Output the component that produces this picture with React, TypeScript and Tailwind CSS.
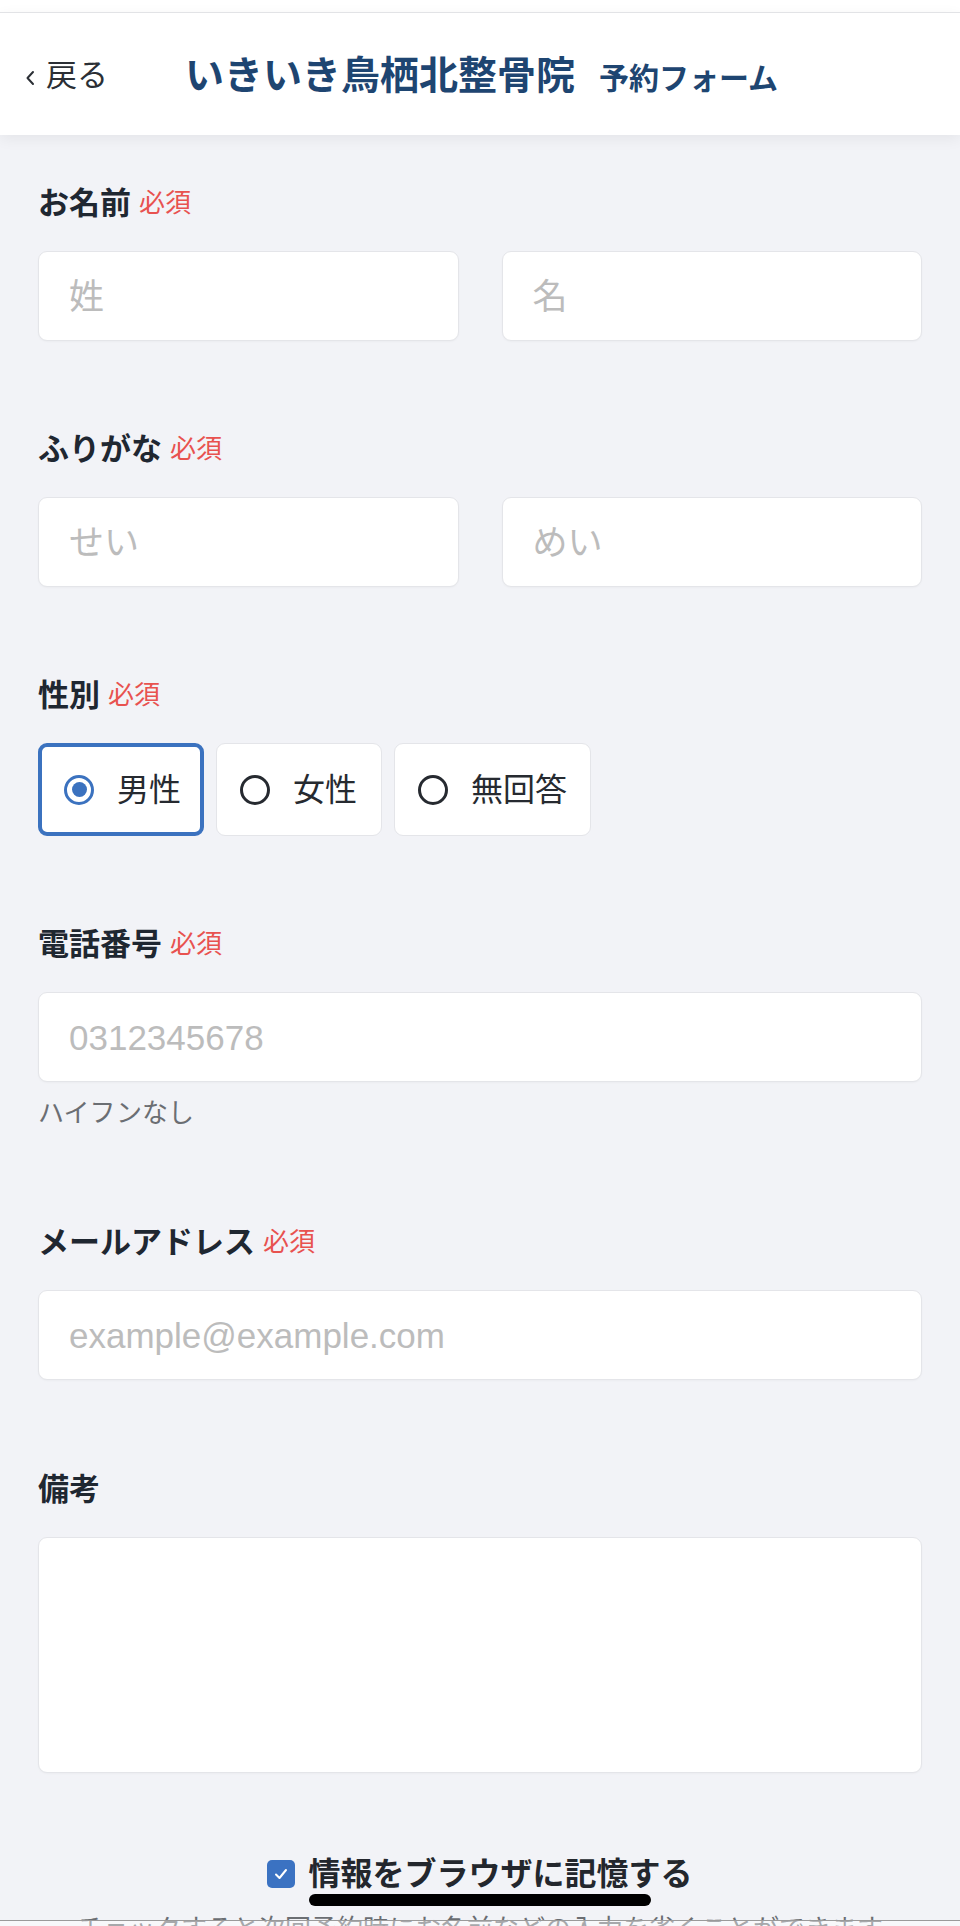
import * as React from "react";

const FONT = "font-['Liberation_Sans','Noto_Sans_CJK_JP',sans-serif]";

function FieldLabel({ text, required }: { text: string; required?: boolean }) {
  return (
    <div className="flex h-[48px] items-center">
      <span className="text-[31px] font-bold leading-none text-[#1f2731]">{text}</span>
      {required && <span className="ml-[8px] text-[26px] leading-none text-[#e8524f]">必須</span>}
    </div>
  );
}

function TextBox({ placeholder, className = "" }: { placeholder?: string; className?: string }) {
  return (
    <div
      className={
        "flex h-[90px] items-center rounded-[9px] border border-[#e4e5e9] bg-white pl-[30px] shadow-[0_1px_2px_rgba(0,0,0,0.03)] " +
        className
      }
    >
      {placeholder && <span className="text-[35px] leading-none text-[#bcbcbc]">{placeholder}</span>}
    </div>
  );
}

function RadioOption({ label, checked, width }: { label: string; checked?: boolean; width: string }) {
  return (
    <div
      className={
        "flex h-[93px] items-center gap-[23px] rounded-[9px] bg-white " +
        width +
        " " +
        (checked ? "border-[4px] border-[#3b72bf] pl-[22px]" : "border border-[#e4e5e9] pl-[23px]")
      }
    >
      {checked ? (
        <span className="flex h-[30px] w-[30px] items-center justify-center rounded-full border-[3px] border-[#3b72bf]">
          <span className="h-[15px] w-[15px] rounded-full bg-[#3b72bf]" />
        </span>
      ) : (
        <span className="h-[30px] w-[30px] rounded-full border-[3px] border-[#262a30]" />
      )}
      <span className="text-[32px] leading-none text-[#262a30]">{label}</span>
    </div>
  );
}

export default function App() {
  return (
    <div className={"relative h-[1926px] overflow-hidden bg-[#f2f3f7] " + FONT}>
      <div className="h-[12px] bg-white" />
      <header className="relative z-10 flex h-[123px] items-center border-t border-[#e2e3e6] bg-white pt-[3px] shadow-[0_4px_14px_rgba(0,0,0,0.06)]">
        <div className="flex w-[185px] items-center pl-[25px]">
          <svg width="11" height="16" viewBox="0 0 11 16" className="mt-[4px]">
            <polyline points="8,2 2.5,8 8,14" fill="none" stroke="#2b2f35" strokeWidth="2" strokeLinecap="round" strokeLinejoin="round" />
          </svg>
          <span className="ml-[10px] text-[31px] leading-none text-[#2b2f35]">戻る</span>
        </div>
        <div className="flex items-baseline">
          <span className="text-[39px] font-bold leading-none text-[#1e4571]">いきいき鳥栖北整骨院</span>
          <span className="ml-[24px] text-[30px] font-bold leading-none text-[#1e4571]">予約フォーム</span>
        </div>
      </header>

      <main className="px-[38px] pt-[44px]">
        <section>
          <FieldLabel text="お名前" required />
          <div className="mt-[24px] grid grid-cols-2 gap-[43px]">
            <TextBox placeholder="姓" />
            <TextBox placeholder="名" />
          </div>
        </section>

        <section className="mt-[84px]">
          <FieldLabel text="ふりがな" required />
          <div className="mt-[24px] grid grid-cols-2 gap-[43px]">
            <TextBox placeholder="せい" />
            <TextBox placeholder="めい" />
          </div>
        </section>

        <section className="mt-[84px]">
          <FieldLabel text="性別" required />
          <div className="mt-[24px] flex gap-[12px]">
            <RadioOption label="男性" checked width="w-[166px]" />
            <RadioOption label="女性" width="w-[166px]" />
            <RadioOption label="無回答" width="w-[197px]" />
          </div>
        </section>

        <section className="mt-[84px]">
          <FieldLabel text="電話番号" required />
          <TextBox placeholder="0312345678" className="mt-[24px]" />
          <p className="mt-[13px] text-[26px] leading-[36px] text-[#6b6e73]">ハイフンなし</p>
        </section>

        <section className="mt-[87px]">
          <FieldLabel text="メールアドレス" required />
          <TextBox placeholder="example@example.com" className="mt-[24px]" />
        </section>

        <section className="mt-[85px]">
          <FieldLabel text="備考" />
          <div className="mt-[24px] h-[236px] rounded-[9px] border border-[#e4e5e9] bg-white shadow-[0_1px_2px_rgba(0,0,0,0.03)]" />
        </section>

        <div className="mt-[81px] flex h-[40px] items-center justify-center">
          <span className="flex h-[28px] w-[28px] items-center justify-center rounded-[5px] bg-[#3b72c2]">
            <svg width="18" height="18" viewBox="0 0 18 18">
              <polyline points="4,9.5 7.5,13 14,5" fill="none" stroke="#fff" strokeWidth="2" strokeLinecap="round" strokeLinejoin="round" />
            </svg>
          </span>
          <span className="ml-[13px] text-[32px] font-bold leading-none text-[#23272d]">情報をブラウザに記憶する</span>
        </div>
        <p className="mt-[22px] text-center text-[26px] leading-none text-[#6b6e73]">
          チェックすると次回予約時にお名前などの入力を省くことができます
        </p>
      </main>

      <div className="absolute bottom-[20px] left-1/2 h-[12px] w-[342px] -translate-x-1/2 rounded-full bg-black" />
      <div className="absolute bottom-0 left-0 right-0 h-[6px] border-t border-[#9a9a9a] bg-white/40" />
    </div>
  );
}
